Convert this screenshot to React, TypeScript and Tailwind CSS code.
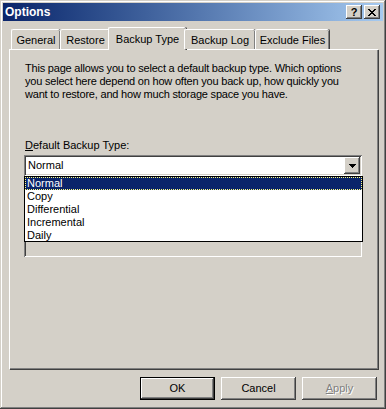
import React from "react"

const tabs = [
  { label: "General", w: "w-[49px]" },
  { label: "Restore", w: "w-[50px]" },
  { label: "Backup Type", w: "w-[78px]", active: true },
  { label: "Backup Log", w: "w-[71px]" },
  { label: "Exclude Files", w: "w-[74px]" },
]

const options = ["Normal", "Copy", "Differential", "Incremental", "Daily"]

const raised =
  "shadow-[inset_-1px_-1px_#404040,inset_1px_1px_#ffffff,inset_-2px_-2px_#808080,inset_2px_2px_#d4d0c8]"
const sunken =
  "shadow-[inset_1px_1px_#808080,inset_-1px_-1px_#ffffff,inset_2px_2px_#404040,inset_-2px_-2px_#d4d0c8]"

function TitleButton({ children }: { children: React.ReactNode }) {
  return (
    <div
      className={`w-[16px] h-[14px] bg-[#d4d0c8] ${raised} flex items-center justify-center text-black font-bold text-[11px] leading-none`}
    >
      {children}
    </div>
  )
}

function Button({ label, isDefault, disabled }: { label: React.ReactNode; isDefault?: boolean; disabled?: boolean }) {
  return (
    <button
      className={`w-[75px] h-[23px] bg-[#d4d0c8] flex items-center justify-center text-[11px] ${
        isDefault ? "border border-black" : ""
      } ${disabled ? "text-[#808080] [text-shadow:1px_1px_#ffffff]" : "text-black"}`}
    >
      <div className={`w-full h-full flex items-center justify-center ${raised}`}>{label}</div>
    </button>
  )
}

export default function App() {
  return (
    <div
      className="w-[386px] h-[409px] bg-[#d4d0c8] p-[3px] flex flex-col shadow-[inset_-1px_-1px_#404040,inset_1px_1px_#d4d0c8,inset_-2px_-2px_#808080,inset_2px_2px_#ffffff] select-none"
      style={{ fontFamily: '"Liberation Sans", Arial, sans-serif' }}
    >
      {/* Title bar */}
      <div className="h-[18px] bg-gradient-to-r from-[#0a246a] to-[#a6caf0] flex items-center justify-between pl-[2px] pr-[3px]">
        <span className="text-white font-bold text-[12px]">Options</span>
        <div className="flex gap-[2px]">
          <TitleButton>?</TitleButton>
          <TitleButton>
            <svg width="8" height="7" viewBox="0 0 8 7">
              <path d="M0 0h2v1h1v1h2V1h1V0h2v1H7v1H6v1H5v1h1v1h1v1h1v1H6V6H5V5H3v1H2v1H0V6h1V5h1V4h1V3H2V2H1V1H0z" fill="#000" />
            </svg>
          </TitleButton>
        </div>
      </div>

      {/* Tabs */}
      <div className="mt-[6px] px-[6px]">
        <div className="flex items-end h-[22px] pl-[2px] relative z-10">
          {tabs.map((t) =>
            t.active ? (
              <div
                key={t.label}
                className={`${t.w} h-[23px] -mx-[2px] -mb-[1px] bg-[#d4d0c8] border-l border-t border-white rounded-tl-[2px] rounded-tr-[2px] shadow-[inset_-1px_0_#808080,1px_0_#404040] flex items-start justify-center pt-[3px] text-[11px] text-black`}
              >
                {t.label}
              </div>
            ) : (
              <div
                key={t.label}
                className={`${t.w} h-[20px] bg-[#d4d0c8] border-l border-t border-white rounded-tl-[2px] rounded-tr-[2px] shadow-[inset_-1px_0_#808080,1px_0_#404040] flex items-center justify-center pt-[1px] text-[11px] text-black`}
              >
                {t.label}
              </div>
            )
          )}
        </div>

        {/* Panel */}
        <div className="w-[369px] h-[320px] border-l border-t border-white shadow-[inset_-1px_-1px_#808080,1px_1px_#404040] pl-[15px] pt-[12px] text-[11px] text-black leading-[13px]">
          <p className="tracking-[-0.2px]">
            This page allows you to select a default backup type. Which options
            <br />
            you select here depend on how often you back up, how quickly you
            <br />
            want to restore, and how much storage space you have.
          </p>

          <p className="mt-[38px]">
            <span className="underline">D</span>efault Backup Type:
          </p>

          <div className="relative w-[338px] mt-[3px] -ml-[1px]">
            {/* Combo box */}
            <div className={`h-[21px] bg-white ${sunken} flex items-center justify-between pl-[4px] pr-[2px]`}>
              <span>Normal</span>
              <div className={`w-[16px] h-[17px] bg-[#d4d0c8] ${raised} flex items-center justify-center`}>
                <svg width="7" height="4" viewBox="0 0 7 4">
                  <path d="M0 0h7v1H6v1H5v1H4v1H3V3H2V2H1V1H0z" fill="#000" />
                </svg>
              </div>
            </div>

            {/* Box behind list */}
            <div className={`h-[81px] bg-[#d4d0c8] ${sunken}`} />

            {/* Dropdown list */}
            <div className="absolute left-0 top-[21px] w-[339px] h-[66px] bg-white border border-black">
              {options.map((o, i) => (
                <div
                  key={o}
                  className={`h-[13px] px-[2px] leading-[13px] ${
                    i === 0 ? "bg-[#0a246a] text-white outline-1 outline-dotted outline-[#ffff80] -outline-offset-1" : "text-black"
                  }`}
                >
                  {o}
                </div>
              ))}
            </div>
          </div>
        </div>
      </div>

      {/* Buttons */}
      <div className="flex justify-end gap-[6px] mt-[8px] pr-[6px]">
        <Button label="OK" isDefault />
        <Button label="Cancel" />
        <Button
          label={
            <span>
              <span className="underline">A</span>pply
            </span>
          }
          disabled
        />
      </div>
    </div>
  )
}
